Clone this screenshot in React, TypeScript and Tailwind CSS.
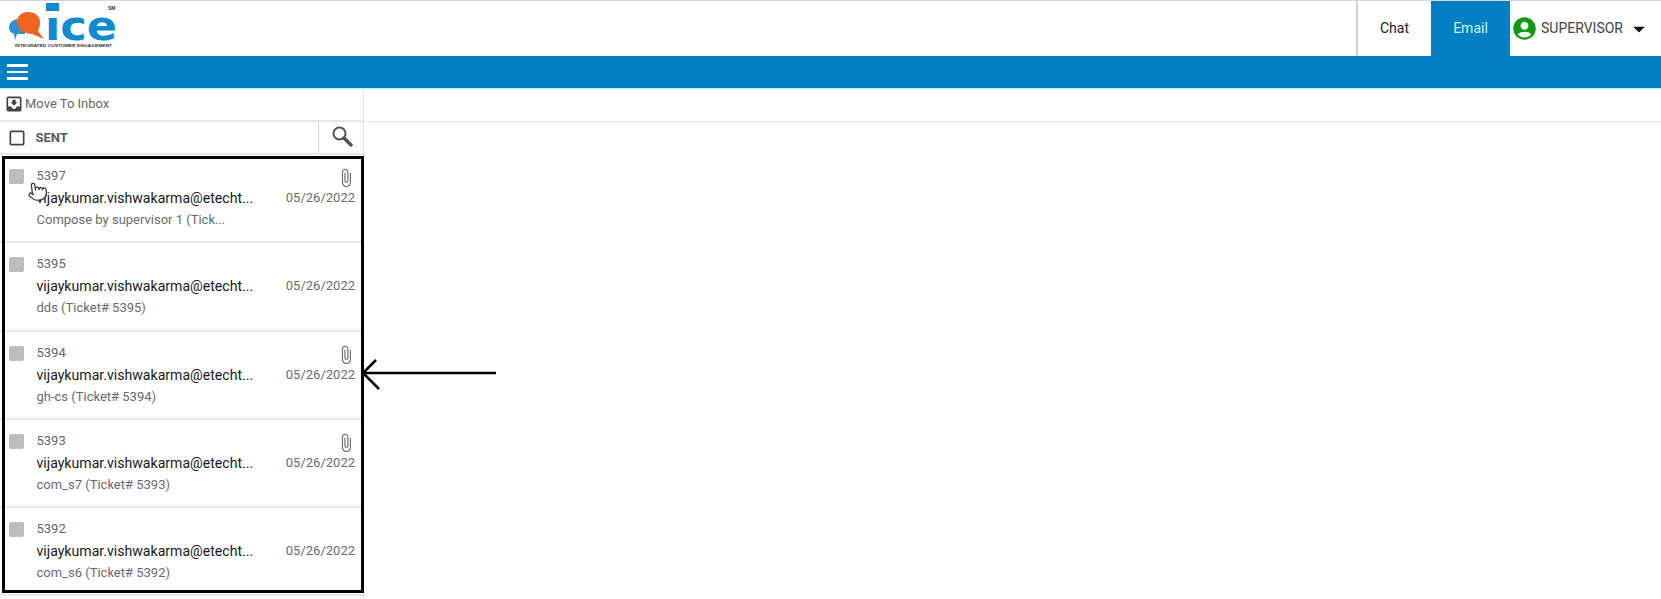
import { FC } from "react";
import { Pointer } from "lucide-react";
import {
  MdAccountCircle,
  MdArrowDropDown,
  MdAttachFile,
  MdCheckBoxOutlineBlank,
  MdMoveToInbox,
} from "react-icons/md";

const tickets = [
  { id: "5397", subject: "Compose by supervisor 1 (Tick...", clip: true },
  { id: "5395", subject: "dds (Ticket# 5395)", clip: false },
  { id: "5394", subject: "gh-cs (Ticket# 5394)", clip: true },
  { id: "5393", subject: "com_s7 (Ticket# 5393)", clip: true },
  { id: "5392", subject: "com_s6 (Ticket# 5392)", clip: false },
];

const Logo: FC = () => (
  <svg width="122" height="52" viewBox="0 0 122 52" className="shrink-0">
    <path d="M9 27c0-6 5-9 10-9h6v15h-8l-2 6-1-6c-3-1-5-3-5-6z" fill="#2f8fd0" />
    <path d="M17 21c0-6 5-10 11-10 7 0 12 4 12 10 0 4-1 7-2 9l6 8-12-5c-8 0-15-5-15-12z" fill="#f0641e" />
    <rect x="46" y="2" width="13" height="8" fill="#0d8ccf" />
    <text
      x="45"
      y="39"
      fontFamily="DejaVu Sans"
      fontWeight="700"
      fontSize="40"
      textLength="72"
      lengthAdjust="spacingAndGlyphs"
      fill="#0d8ccf"
    >
      ıce
    </text>
    <text x="108" y="9" fontFamily="Liberation Sans" fontWeight="700" fontSize="5" fill="#333">
      SM
    </text>
    <text
      x="15"
      y="46"
      fontFamily="Liberation Sans"
      fontWeight="700"
      fontSize="4.2"
      textLength="97"
      lengthAdjust="spacingAndGlyphs"
      fill="#333"
    >
      INTEGRATED CUSTOMER ENGAGEMENT
    </text>
  </svg>
);

const SearchIcon: FC = () => (
  <svg width="22" height="22" viewBox="0 0 22 22">
    <circle cx="8.5" cy="8.5" r="6" fill="none" stroke="#555" strokeWidth="2" />
    <path d="M13 13L20 20" stroke="#555" strokeWidth="3.5" strokeLinecap="round" />
  </svg>
);

const TicketRow: FC<{ id: string; subject: string; clip: boolean }> = ({ id, subject, clip }) => (
  <div className="flex h-[88.3px] border-b-2 border-[#e8e8e8] pt-[13px] pl-[9px] pr-[8px]">
    <div className="mt-[1px] h-[15px] w-[15px] shrink-0 rounded-[2px] bg-[#bdbdbd]" />
    <div className="ml-[12.5px] min-w-0 flex-1">
      <div className="text-[13px] leading-[16px] text-[#666]">{id}</div>
      <div className="mt-[5px] text-[14.1px] leading-[18px] text-[#1a1a1a]">
        vijaykumar.vishwakarma@etecht...
      </div>
      <div className="mt-[4px] text-[13px] leading-[17px] text-[#6b6b6b]">{subject}</div>
    </div>
    <div className="flex w-[70px] shrink-0 flex-col items-end">
      <div className="-mr-[1px] h-[20px]">
        {clip && <MdAttachFile className="text-[20px] text-[#777]" />}
      </div>
      <div className="mt-[1px] text-[13px] leading-[18px] text-[#6b6b6b]">05/26/2022</div>
    </div>
  </div>
);

export default function App() {
  return (
    <div className="relative h-[599px] w-[1661px] overflow-hidden bg-white font-['Roboto',sans-serif]">
      <header className="flex h-[56px] items-stretch border-t border-[#d8d8d8] bg-white">
        <Logo />
        <div className="flex-1" />
        <div className="flex w-[75px] items-center justify-center border-l-2 border-[#d4d4d4] text-[14px] text-[#222]">
          Chat
        </div>
        <div className="flex w-[79px] items-center justify-center bg-[#0080c3] text-[14px] text-[#d5f1ff]">
          Email
        </div>
        <div className="flex w-[151px] items-center pl-[1px] text-[14px] text-[#444]">
          <MdAccountCircle className="text-[27px] text-[#0f9a0f]" />
          <span className="ml-[3px]">SUPERVISOR</span>
          <MdArrowDropDown className="ml-[2px] text-[28px] text-[#111]" />
        </div>
      </header>

      <div className="flex h-[33px] items-center border-b border-[#b5efff] bg-[#0080c3] pl-[7px]">
        <div className="flex w-[21px] flex-col gap-[4px]">
          <div className="h-[2.5px] bg-white" />
          <div className="h-[2.5px] bg-white" />
          <div className="h-[2.5px] bg-white" />
        </div>
      </div>

      <div className="flex h-[510px]">
        <aside className="w-[364px] shrink-0 border-r border-[#e2e2e2]">
          <div className="flex h-[33px] items-center border-b-2 border-[#e8e8e8] pb-[2px] pl-[4px] text-[13px] text-[#666]">
            <MdMoveToInbox className="text-[20px] text-[#444]" />
            <span className="ml-[1px]">Move To Inbox</span>
          </div>
          <div className="flex h-[33px] items-stretch border-b-2 border-[#e8e8e8]">
            <div className="flex flex-1 items-center pl-[7px] text-[13px] font-bold text-[#5a5a5a]">
              <MdCheckBoxOutlineBlank className="text-[20px] text-[#444]" />
              <span className="ml-[8.5px]">SENT</span>
            </div>
            <div className="flex w-[45px] items-center justify-center border-l border-[#d4d4d4] pb-[3px] pl-[2px]">
              <SearchIcon />
            </div>
          </div>
          {tickets.map((t) => (
            <TicketRow key={t.id} id={t.id} subject={t.subject} clip={t.clip} />
          ))}
        </aside>
        <main className="flex-1">
          <div className="h-[33px] border-b border-[#e2e2e2]" />
        </main>
      </div>

      {/* annotation drawn on top of the screenshot */}
      <div className="absolute left-[2px] top-[156px] h-[437px] w-[362px] border-[3px] border-black" />
      <svg className="absolute left-[360px] top-[350px]" width="140" height="50" viewBox="0 0 140 50">
        <path d="M3 23H136M16 10L3 23L19 39" fill="none" stroke="#000" strokeWidth="2.5" />
      </svg>
      <Pointer
        size={21}
        strokeWidth={1.4}
        className="absolute left-[27px] top-[181px] rotate-[-8deg] fill-white text-[#333]"
      />
    </div>
  );
}
